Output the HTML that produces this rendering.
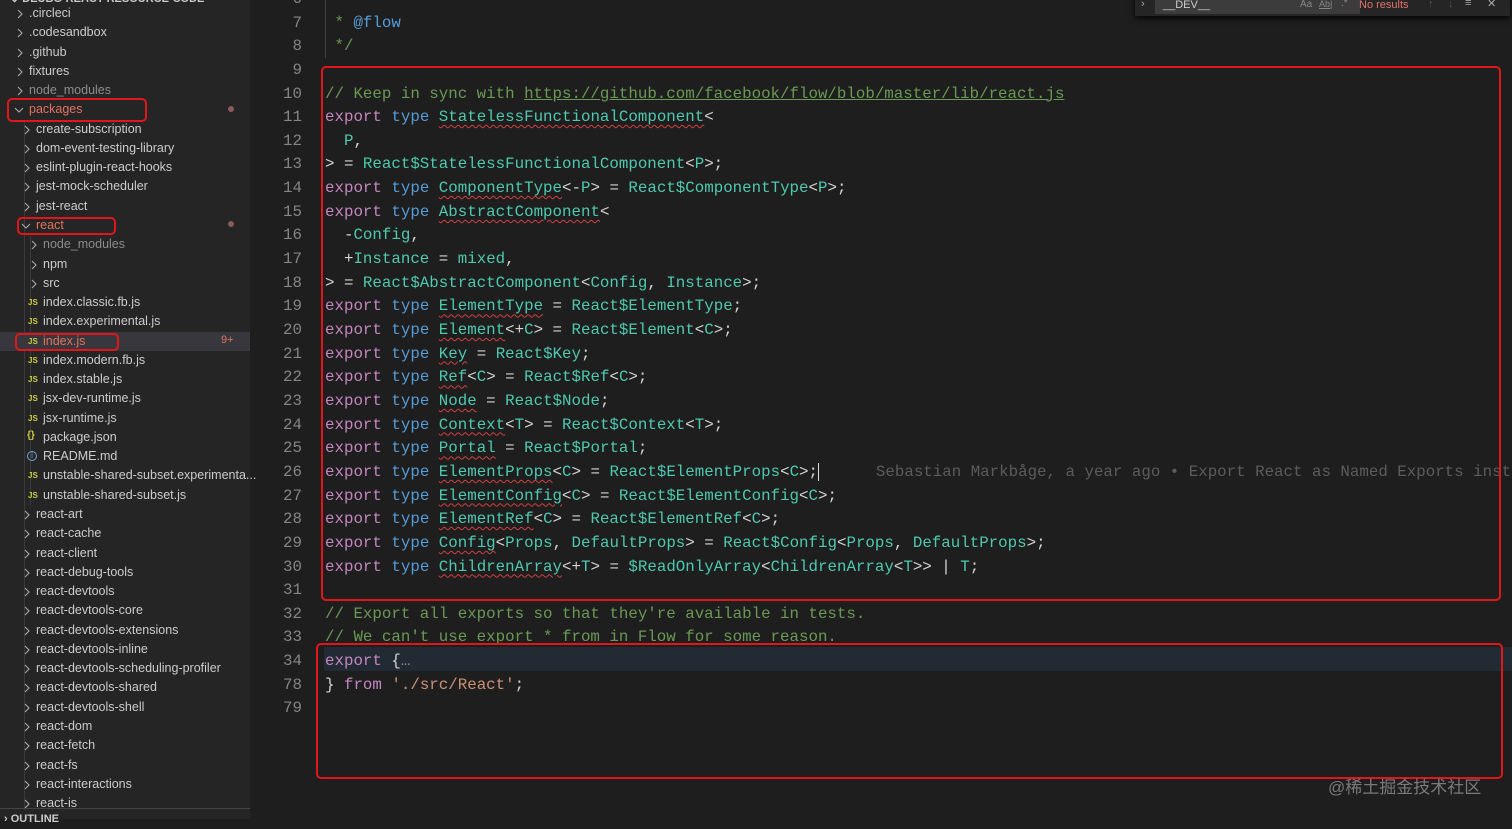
<!DOCTYPE html>
<html><head><meta charset="utf-8">
<style>
*{margin:0;padding:0;box-sizing:border-box}
html,body{width:1512px;height:819px;overflow:hidden;background:#1e1e1e}
#side{position:absolute;left:0;top:0;width:250px;height:819px;background:#252526;font-family:"Liberation Sans",sans-serif;font-size:12.5px;color:#cccccc}
.r{position:absolute;height:19px;line-height:19px;white-space:nowrap}
.ch{position:absolute}
.js{position:absolute;font-size:8px;font-weight:bold;color:#cbcb41}
.guide{position:absolute;width:1px;background:#3a3a3a}
#ed{position:absolute;left:250px;top:0;width:1262px;height:819px;font-family:"Liberation Mono",monospace;font-size:15.8px}
.ln{position:absolute;left:0;width:52px;text-align:right;color:#858585;height:23.65px;line-height:23.65px}
.cl{position:absolute;left:75px;white-space:pre;color:#d4d4d4;height:23.65px;line-height:23.65px}
.k{color:#c586c0}.t{color:#569cd6}.n{color:#4ec9b0}.c{color:#6a9955}.s{color:#ce9178}.v{color:#9cdcfe}
.u{text-decoration:underline wavy #d04040;text-decoration-thickness:1px;text-underline-offset:3px}
.box{position:absolute;border:2.5px solid #e0161b;border-radius:5px}
</style></head><body>
<div id="side">
<div class="r" style="left:10px;top:-10px;font-weight:bold;font-size:11px">⌄ DEUBG-REACT-RESOURCE-CODE</div>
<div class="guide" style="left:24px;top:120px;height:690px"></div>
<div class="guide" style="left:30px;top:236px;height:270px"></div>
</div>
<div id="ed"></div>
<script>
var side=document.getElementById('side');
var items=[
['.circleci',1,'f'],['.codesandbox',1,'f'],['.github',1,'f'],['fixtures',1,'f'],['node_modules',1,'f','#8c8c8c'],
['packages',1,'o','#e2735e'],['create-subscription',2,'f'],['dom-event-testing-library',2,'f'],['eslint-plugin-react-hooks',2,'f'],
['jest-mock-scheduler',2,'f'],['jest-react',2,'f'],['react',2,'o','#e2735e'],['node_modules',3,'f','#8c8c8c'],['npm',3,'f'],['src',3,'f'],
['index.classic.fb.js',3,'j'],['index.experimental.js',3,'j'],['index.js',3,'j','#e2735e'],['index.modern.fb.js',3,'j'],['index.stable.js',3,'j'],
['jsx-dev-runtime.js',3,'j'],['jsx-runtime.js',3,'j'],['package.json',3,'b'],['README.md',3,'i'],['unstable-shared-subset.experimenta...',3,'j'],
['unstable-shared-subset.js',3,'j'],['react-art',2,'f'],['react-cache',2,'f'],['react-client',2,'f'],['react-debug-tools',2,'f'],['react-devtools',2,'f'],
['react-devtools-core',2,'f'],['react-devtools-extensions',2,'f'],['react-devtools-inline',2,'f'],['react-devtools-scheduling-profiler',2,'f'],
['react-devtools-shared',2,'f'],['react-devtools-shell',2,'f'],['react-dom',2,'f'],['react-fetch',2,'f'],['react-fs',2,'f'],['react-interactions',2,'f'],['react-is',2,'f']];
var h='';
items.forEach(function(it,i){
 var y=4+i*19.27, lvl=it[1], typ=it[2], col=it[3]||'#cccccc';
 var tx=lvl==1?29:(lvl==2?36:43);
 if(it[0]=='index.js') h+='<div style="position:absolute;left:0;top:'+(y+0.5)+'px;width:250px;height:19px;background:#37373d"></div>';
 if(typ=='f') h+='<svg class="ch" style="left:'+(tx-13)+'px;top:'+(y+5)+'px" width="8" height="10"><polyline points="2,1 6,5 2,9" fill="none" stroke="#aaa" stroke-width="1.1"/></svg>';
 if(typ=='o') h+='<svg class="ch" style="left:'+(tx-15)+'px;top:'+(y+6)+'px" width="10" height="8"><polyline points="1,2 5,6 9,2" fill="none" stroke="#aaa" stroke-width="1.1"/></svg>';
 if(typ=='j')h+='<div class="js" style="left:28px;top:'+(y+5)+'px">JS</div>';
 if(typ=='b')h+='<div style="position:absolute;left:27px;top:'+(y+2)+'px;font-size:10px;color:#cbcb41;font-weight:bold">{}</div>';
 if(typ=='i')h+='<div style="position:absolute;left:27px;top:'+(y+4)+'px;width:10px;height:10px;border:1px solid #6fa6d6;border-radius:50%;font-size:8px;line-height:8px;text-align:center;color:#6fa6d6">i</div>';
 h+='<div class="r" style="left:'+tx+'px;top:'+y+'px;color:'+col+'">'+it[0]+'</div>';
});
h+='<div style="position:absolute;left:228px;top:106px;width:6px;height:6px;border-radius:50%;background:#8c5a5a"></div>';
h+='<div style="position:absolute;left:228px;top:221px;width:6px;height:6px;border-radius:50%;background:#8c5a5a"></div>';
h+='<div class="r" style="left:221px;top:331px;color:#e2735e;font-size:11px">9+</div>';
h+='<div class="box" style="left:7px;top:98px;width:140px;height:24px;border-width:2px"></div>';
h+='<div class="box" style="left:17px;top:217px;width:99px;height:18px;border-width:2px"></div>';
h+='<div class="box" style="left:15px;top:333px;width:104px;height:18px;border-width:2px"></div>';
h+='<div style="position:absolute;left:0;top:808px;width:250px;height:1px;background:#444"></div>';
h+='<div class="r" style="left:4px;top:810px;font-weight:bold;font-size:11px">› OUTLINE</div>';
side.innerHTML+=h;

var U=function(s){return '<span class="n u">'+s+'</span>'};
var E='<span class="k">export</span> <span class="t">type</span> ';
var lines=[
['6','<span class="c"> *</span>'],
['7','<span class="c"> * </span><span class="t">@flow</span>'],
['8','<span class="c"> */</span>'],
['9',''],
['10','<span class="c">// Keep in sync with <u>https://github.com/facebook/flow/blob/master/lib/react.js</u></span>'],
['11',E+U('StatelessFunctionalComponent')+'&lt;'],
['12','  <span class="n">P</span>,'],
['13','&gt; = <span class="n">React$StatelessFunctionalComponent</span>&lt;<span class="n">P</span>&gt;;'],
['14',E+U('ComponentType')+'&lt;-<span class="n">P</span>&gt; = <span class="n">React$ComponentType</span>&lt;<span class="n">P</span>&gt;;'],
['15',E+U('AbstractComponent')+'&lt;'],
['16','  -<span class="n">Config</span>,'],
['17','  +<span class="n">Instance</span> = <span class="n">mixed</span>,'],
['18','&gt; = <span class="n">React$AbstractComponent</span>&lt;<span class="n">Config</span>, <span class="n">Instance</span>&gt;;'],
['19',E+U('ElementType')+' = <span class="n">React$ElementType</span>;'],
['20',E+U('Element')+'&lt;+<span class="n">C</span>&gt; = <span class="n">React$Element</span>&lt;<span class="n">C</span>&gt;;'],
['21',E+U('Key')+' = <span class="n">React$Key</span>;'],
['22',E+U('Ref')+'&lt;<span class="n">C</span>&gt; = <span class="n">React$Ref</span>&lt;<span class="n">C</span>&gt;;'],
['23',E+U('Node')+' = <span class="n">React$Node</span>;'],
['24',E+U('Context')+'&lt;<span class="n">T</span>&gt; = <span class="n">React$Context</span>&lt;<span class="n">T</span>&gt;;'],
['25',E+U('Portal')+' = <span class="n">React$Portal</span>;'],
['26',E+U('ElementProps')+'&lt;<span class="n">C</span>&gt; = <span class="n">React$ElementProps</span>&lt;<span class="n">C</span>&gt;;<span style="border-left:1.5px solid #ddd"></span>      <span style="color:#5c5c5c">Sebastian Markbåge, a year ago • Export React as Named Exports inst</span>'],
['27',E+U('ElementConfig')+'&lt;<span class="n">C</span>&gt; = <span class="n">React$ElementConfig</span>&lt;<span class="n">C</span>&gt;;'],
['28',E+U('ElementRef')+'&lt;<span class="n">C</span>&gt; = <span class="n">React$ElementRef</span>&lt;<span class="n">C</span>&gt;;'],
['29',E+U('Config')+'&lt;<span class="n">Props</span>, <span class="n">DefaultProps</span>&gt; = <span class="n">React$Config</span>&lt;<span class="n">Props</span>, <span class="n">DefaultProps</span>&gt;;'],
['30',E+U('ChildrenArray')+'&lt;+<span class="n">T</span>&gt; = <span class="n">$ReadOnlyArray</span>&lt;<span class="n">ChildrenArray</span>&lt;<span class="n">T</span>&gt;&gt; | <span class="n">T</span>;'],
['31',''],
['32','<span class="c">// Export all exports so that they\'re available in tests.</span>'],
['33','<span class="c">// We can\'t use export * from in Flow for some reason.</span>'],
['34','<span class="k">export</span> {<span style="color:#888">…</span>'],
['78','} <span class="k">from</span> <span class="s">\'./src/React\'</span>;'],
['79','']];
var ed=document.getElementById('ed'),o='';
o+='<div style="position:absolute;left:74px;top:647px;width:1188px;height:24px;background:#222b34"></div>';
o+='<div style="position:absolute;left:75px;top:0;width:1px;height:58px;background:#404040"></div>';
lines.forEach(function(l,i){
 var top=-12.1+i*23.65;
 o+='<div class="ln" style="top:'+top+'px">'+l[0]+'</div>';
 o+='<div class="cl" style="top:'+top+'px">'+l[1]+'</div>';
});
o+='<div class="box" style="left:71px;top:66px;width:1180px;height:535px"></div>';
o+='<div class="box" style="left:66px;top:643px;width:1187px;height:136px"></div>';
o+='<div style="position:absolute;left:885px;top:-6px;width:375px;height:22px;background:#252526;box-shadow:0 2px 6px #000;font-family:Liberation Sans,sans-serif;font-size:11px;color:#ccc">'+
'<span style="position:absolute;left:6px;top:4px;color:#aaa">›</span>'+
'<div style="position:absolute;left:20px;top:0;width:205px;height:20px;background:#3c3c3c"></div>'+
'<span style="position:absolute;left:28px;top:5px">__DEV__</span>'+
'<span style="position:absolute;left:165px;top:5px;color:#888;font-size:10px">Aa</span>'+
'<span style="position:absolute;left:184px;top:5px;color:#888;font-size:9px;text-decoration:underline">Ab|</span>'+
'<span style="position:absolute;left:206px;top:4px;color:#888;font-size:10px">.*</span>'+
'<span style="position:absolute;left:224px;top:5px;color:#e2736e">No results</span>'+
'<span style="position:absolute;left:293px;top:4px;color:#555">↑</span>'+
'<span style="position:absolute;left:313px;top:4px;color:#555">↓</span>'+
'<span style="position:absolute;left:330px;top:3px;color:#aaa">≡</span>'+
'<span style="position:absolute;left:352px;top:3px;color:#aaa">✕</span></div>';
o+='<div style="position:absolute;left:1078px;top:773px;font-family:\'Liberation Sans\',\'Noto Sans CJK SC\',sans-serif;font-size:17px;color:#7a7a7a">@稀土掘金技术社区</div>';
ed.innerHTML=o;
</script>
</body></html>
